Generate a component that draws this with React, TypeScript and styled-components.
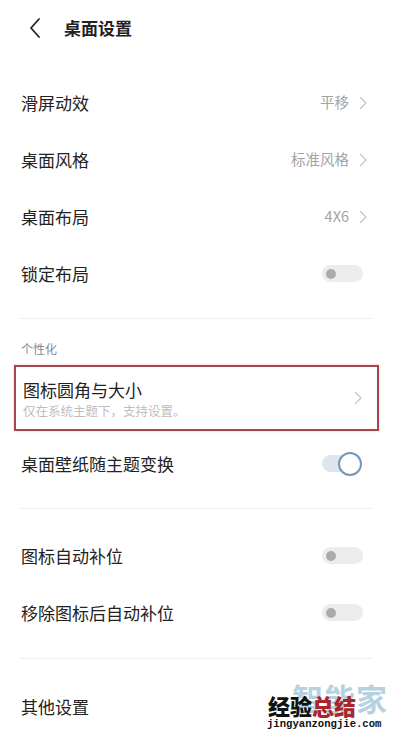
import React from "react";
import styled, { createGlobalStyle } from "styled-components";

const Global = createGlobalStyle`
  html, body { margin: 0; padding: 0; background: #fff; }
  body { font-family: "Noto Sans CJK SC", "Noto Sans", sans-serif; }
  * { box-sizing: border-box; }
`;

const Page = styled.div`
  position: relative;
  width: 400px;
  height: 742px;
  overflow: hidden;
  background: #fff;
  color: #1c1c1c;
`;

const Header = styled.div`
  height: 55px;
  display: flex;
  align-items: center;
  padding-left: 28px;
  gap: 22px;
`;

const Title = styled.div`
  font-size: 17px;
  font-weight: 600;
  color: #222;
  line-height: 1;
`;

const Group = styled.div<{ $top?: number; $bottom?: number }>`
  padding: ${(p) => `${p.$top ?? 18}px 0 ${p.$bottom ?? 17}px`};
`;

const Divider = styled.div`
  height: 1px;
  margin: 0 28px 0 20px;
  background: #efefef;
`;

const Row = styled.div`
  height: 57px;
  display: flex;
  align-items: center;
  justify-content: space-between;
  padding: 0 36px 0 21px;
`;

const Label = styled.div`
  font-size: 17px;
  color: #222;
  line-height: 1;
`;

const Right = styled.div`
  display: flex;
  align-items: center;
  gap: 10px;
  margin-right: -4px;
`;

const Value = styled.span`
  font-size: 14.5px;
  color: #a3a3a3;
  line-height: 1;
`;

const SectionTitle = styled.div`
  font-size: 12px;
  color: #8a8a8a;
  line-height: 16px;
  padding: 22px 0 0 21px;
`;

const Highlight = styled.div`
  margin: 8px 0 0 14px;
  width: 365px;
  height: 66px;
  border: 2px solid #a8454a;
  box-shadow: 0 0 2px rgba(168, 69, 74, 0.35);
  display: flex;
  align-items: center;
  justify-content: space-between;
  padding: 0 14px 0 7px;
`;

const TwoLine = styled.div`
  display: flex;
  flex-direction: column;
  gap: 7px;
  padding-top: 2px;
`;

const Sub = styled.div`
  font-size: 12.5px;
  color: #bdbdbd;
  line-height: 1;
`;

const Track = styled.div<{ $on?: boolean }>`
  position: relative;
  width: ${(p) => (p.$on ? "26px" : "41px")};
  height: 17px;
  border-radius: 9px;
  background: ${(p) => (p.$on ? "#dbe6f1" : "#ececec")};
`;

const Knob = styled.div<{ $on?: boolean }>`
  position: absolute;
  top: 50%;
  transform: translateY(-50%);
  ${(p) =>
    p.$on
      ? `right: -14px; width: 24px; height: 24px; border-radius: 50%; background: #fff; border: 2.5px solid #7497b8;`
      : `left: 4px; width: 10px; height: 10px; border-radius: 50%; background: #ababab;`}
`;

const ToggleWrap = styled.div<{ $on?: boolean }>`
  margin-right: ${(p) => (p.$on ? "16px" : "1px")};
`;

const Watermark = styled.div`
  position: absolute;
  right: 12px;
  bottom: 1px;
  width: 122px;
  height: 62px;
  pointer-events: none;
`;

const WmBig = styled.div`
  position: absolute;
  right: 0;
  top: 3px;
  font-size: 31px;
  font-weight: 700;
  letter-spacing: 1px;
  color: rgba(150, 190, 210, 0.7);
  line-height: 1;
`;

const WmMid = styled.div`
  position: absolute;
  left: 2px;
  top: 15px;
  font-size: 22px;
  font-weight: 900;
  line-height: 1;
  color: #111;
`;

const Red = styled.span`
  color: #a8262a;
`;

const WmSmall = styled.div`
  position: absolute;
  left: 1px;
  top: 40px;
  font-family: "Liberation Mono", "DejaVu Sans Mono", monospace;
  font-size: 10.6px;
  font-weight: 700;
  color: #111;
  line-height: 1;
  background: rgba(255, 255, 255, 0.6);
`;

const Chevron = () => (
  <svg width="9" height="14" viewBox="0 0 9 14" fill="none">
    <path d="M1.5 1.5 L7 7 L1.5 12.5" stroke="#c4c4c4" strokeWidth="1.3" strokeLinecap="round" strokeLinejoin="round" />
  </svg>
);

const Back = () => (
  <svg width="14" height="22" viewBox="0 0 14 22" fill="none">
    <path d="M11 2 L3 11 L11 20" stroke="#222" strokeWidth="1.8" strokeLinecap="round" strokeLinejoin="round" />
  </svg>
);

const Toggle = ({ on }: { on?: boolean }) => (
  <ToggleWrap $on={on}>
    <Track $on={on}>
      <Knob $on={on} />
    </Track>
  </ToggleWrap>
);

const NavRow = ({ label, value }: { label: string; value: string }) => (
  <Row>
    <Label>{label}</Label>
    <Right>
      <Value>{value}</Value>
      <Chevron />
    </Right>
  </Row>
);

const SwitchRow = ({ label, on }: { label: string; on?: boolean }) => (
  <Row>
    <Label>{label}</Label>
    <Toggle on={on} />
  </Row>
);

export default function App() {
  return (
    <Page>
      <Global />
      <Header>
        <Back />
        <Title>桌面设置</Title>
      </Header>
      <Group $top={19} $bottom={16}>
        <NavRow label="滑屏动效" value="平移" />
        <NavRow label="桌面风格" value="标准风格" />
        <NavRow label="桌面布局" value="4X6" />
        <SwitchRow label="锁定布局" />
      </Group>
      <Divider />
      <SectionTitle>个性化</SectionTitle>
      <Highlight>
        <TwoLine>
          <Label>图标圆角与大小</Label>
          <Sub>仅在系统主题下，支持设置。</Sub>
        </TwoLine>
        <Chevron />
      </Highlight>
      <Group $top={4} $bottom={16}>
        <SwitchRow label="桌面壁纸随主题变换" on />
      </Group>
      <Divider />
      <Group $top={18} $bottom={17}>
        <SwitchRow label="图标自动补位" />
        <SwitchRow label="移除图标后自动补位" />
      </Group>
      <Divider />
      <Group $top={19} $bottom={0}>
        <Row>
          <Label>其他设置</Label>
        </Row>
      </Group>
      <Watermark>
        <WmBig>智能家</WmBig>
        <WmMid>
          经验<Red>总结</Red>
        </WmMid>
        <WmSmall>jingyanzongjie.com</WmSmall>
      </Watermark>
    </Page>
  );
}
